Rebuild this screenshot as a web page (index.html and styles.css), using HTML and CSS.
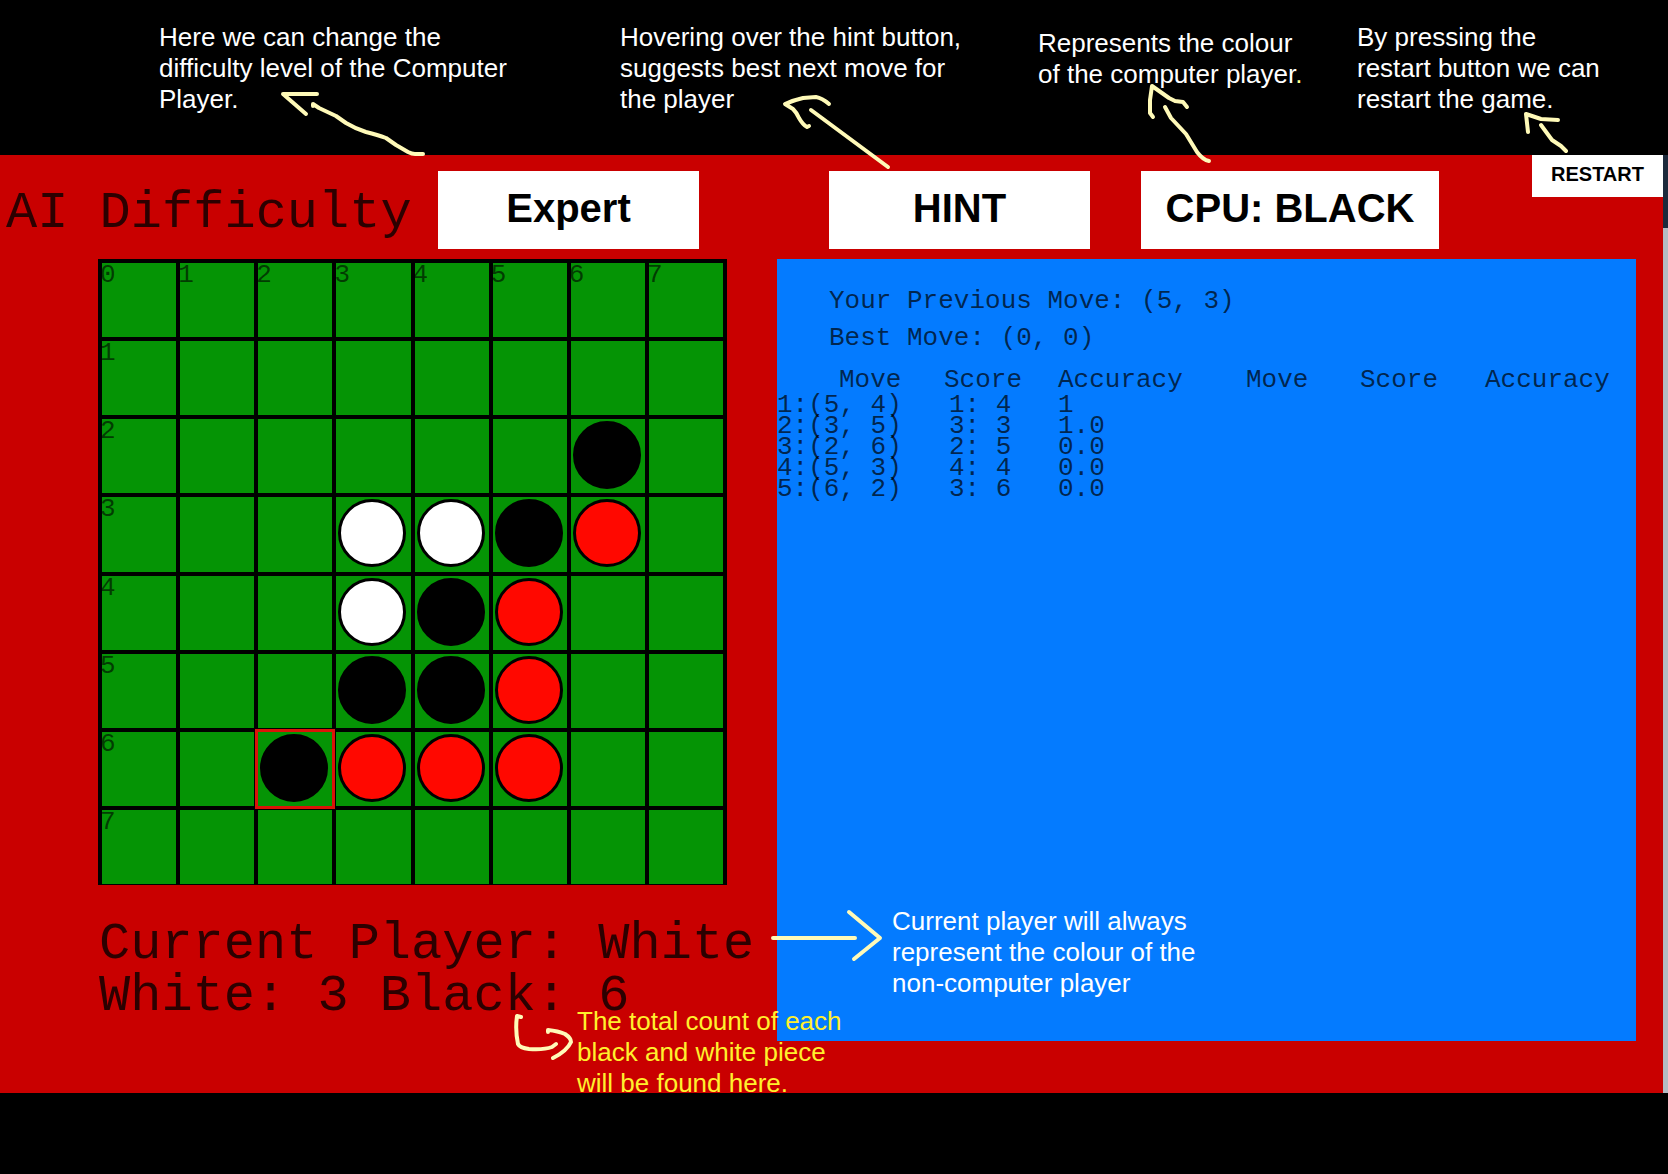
FILE: index.html
```html
<!DOCTYPE html>
<html lang="en">
<head>
<meta charset="utf-8">
<meta name="viewport" content="width=device-width, initial-scale=1">
<title>Othello</title>
<link rel="stylesheet" href="styles.css">
</head>
<body>
<header class="notes">
  <p class="note">Here we can change the<br>difficulty level of the Computer<br>Player.
    <svg class="arrow arrow-difficulty" width="152" height="72" viewBox="278 88 152 72" aria-hidden="true"><path d="M317 94H283L306 114M313 106V104L319 108L336 116L346 123Q356 129 366 132Q378 135 386 138L396 145L408 152Q412 154 415 154H423"/></svg>
  </p>
  <p class="note">Hovering over the hint button,<br>suggests best next move for<br>the player
    <svg class="arrow arrow-hint" width="114" height="80" viewBox="780 92 114 80" aria-hidden="true"><path d="M829 104Q822 98 816 97L803 98Q794 100 785 104L793 109Q797 113 799 118Q803 125 807 127L809 126M811 110L888 167"/></svg>
  </p>
  <p class="note note-low">Represents the colour<br>of the computer player<span class="accent">.</span>
    <svg class="arrow arrow-cpu" width="70" height="86" viewBox="1145 81 70 86" aria-hidden="true"><path d="M1153 117L1150 113V100L1152 86L1169 98L1175 101L1183 102L1187 107M1165 107L1171 118L1186 134L1197 152Q1203 160 1209 161"/></svg>
  </p>
  <p class="note">By pressing the<br>restart button we can<br>restart the game.
    <svg class="arrow arrow-restart" width="52" height="48" viewBox="1520 108 52 48" aria-hidden="true"><path d="M1528 132L1526 114L1541 119L1558 120M1541 125L1552 140L1561 146L1566 151"/></svg>
  </p>
</header>

<div class="window">
  <main class="game">
    <div class="toolbar">
      <span class="mono-large title" id="difficulty-label">AI Difficulty</span>
      <button class="control" type="button" aria-describedby="difficulty-label">Expert</button>
      <button class="control" type="button">HINT</button>
      <button class="control control-wide" type="button">CPU: BLACK</button>
      <button class="restart" type="button">RESTART</button>
    </div>

    <div class="play">
      <section class="left">
        <div class="board">
          <button class="cell" type="button"><span class="coord">0</span></button><button class="cell" type="button"><span class="coord">1</span></button><button class="cell" type="button"><span class="coord">2</span></button><button class="cell" type="button"><span class="coord">3</span></button><button class="cell" type="button"><span class="coord">4</span></button><button class="cell" type="button"><span class="coord">5</span></button><button class="cell" type="button"><span class="coord">6</span></button><button class="cell" type="button"><span class="coord">7</span></button>

          <button class="cell" type="button"><span class="coord">1</span></button><button class="cell" type="button"></button><button class="cell" type="button"></button><button class="cell" type="button"></button><button class="cell" type="button"></button><button class="cell" type="button"></button><button class="cell" type="button"></button><button class="cell" type="button"></button>

          <button class="cell" type="button"><span class="coord">2</span></button><button class="cell" type="button"></button><button class="cell" type="button"></button><button class="cell" type="button"></button><button class="cell" type="button"></button><button class="cell" type="button"></button><button class="cell" type="button"><span class="disc black"></span></button><button class="cell" type="button"></button>

          <button class="cell" type="button"><span class="coord">3</span></button><button class="cell" type="button"></button><button class="cell" type="button"></button><button class="cell" type="button"><span class="disc white"></span></button><button class="cell" type="button"><span class="disc white"></span></button><button class="cell" type="button"><span class="disc black"></span></button><button class="cell" type="button"><span class="disc option"></span></button><button class="cell" type="button"></button>

          <button class="cell" type="button"><span class="coord">4</span></button><button class="cell" type="button"></button><button class="cell" type="button"></button><button class="cell" type="button"><span class="disc white"></span></button><button class="cell" type="button"><span class="disc black"></span></button><button class="cell" type="button"><span class="disc option"></span></button><button class="cell" type="button"></button><button class="cell" type="button"></button>

          <button class="cell" type="button"><span class="coord">5</span></button><button class="cell" type="button"></button><button class="cell" type="button"></button><button class="cell" type="button"><span class="disc black"></span></button><button class="cell" type="button"><span class="disc black"></span></button><button class="cell" type="button"><span class="disc option"></span></button><button class="cell" type="button"></button><button class="cell" type="button"></button>

          <button class="cell" type="button"><span class="coord">6</span></button><button class="cell" type="button"></button><button class="cell last-move" type="button"><span class="disc black"></span></button><button class="cell" type="button"><span class="disc option"></span></button><button class="cell" type="button"><span class="disc option"></span></button><button class="cell" type="button"><span class="disc option"></span></button><button class="cell" type="button"></button><button class="cell" type="button"></button>

          <button class="cell" type="button"><span class="coord">7</span></button><button class="cell" type="button"></button><button class="cell" type="button"></button><button class="cell" type="button"></button><button class="cell" type="button"></button><button class="cell" type="button"></button><button class="cell" type="button"></button><button class="cell" type="button"></button>
        </div>
        <div class="status">
          <p class="mono-large">Current Player: White</p>
          <p class="mono-large">White: 3 Black: 6</p>
          <p class="note note-count">The total count of each<br>black and white piece<br>will be found here.
            <svg class="arrow arrow-count" width="66" height="54" viewBox="512 1010 66 54" aria-hidden="true"><path d="M522 1017L518 1016Q516 1030 519 1044Q521 1048 530 1049Q545 1050 553 1047L557 1044M549 1032V1030Q559 1031 566 1034Q572 1038 572 1042Q568 1051 554 1058"/></svg>
          </p>
        </div>
      </section>

      <section class="panel">
        <p class="info">Your Previous Move: (5, 3)</p>
        <p class="info">Best Move: (0, 0)</p>
        <table class="moves">
          <colgroup><col class="col-move"><col class="col-score"><col class="col-accuracy"><col class="col-move-next"><col class="col-score-next"><col></colgroup>
          <thead>
            <tr><th class="move-head" scope="col">Move</th><th scope="col">Score</th><th scope="col">Accuracy</th><th scope="col">Move</th><th scope="col">Score</th><th scope="col">Accuracy</th></tr>
          </thead>
          <tbody>
            <tr><td>1:(5, 4)</td><td class="score">1: 4</td><td>1</td><td></td><td></td><td></td></tr>
            <tr><td>2:(3, 5)</td><td class="score">3: 3</td><td>1.0</td><td></td><td></td><td></td></tr>
            <tr><td>3:(2, 6)</td><td class="score">2: 5</td><td>0.0</td><td></td><td></td><td></td></tr>
            <tr><td>4:(5, 3)</td><td class="score">4: 4</td><td>0.0</td><td></td><td></td><td></td></tr>
            <tr><td>5:(6, 2)</td><td class="score">3: 6</td><td>0.0</td><td></td><td></td><td></td></tr>
          </tbody>
        </table>
        <p class="note note-player">Current player will always<br>represent the colour of the<br>non-computer player
          <svg class="arrow arrow-player" width="118" height="57" viewBox="768 907 118 57" aria-hidden="true"><path d="M773 938H855M849 912L880 938L854 959"/></svg>
        </p>
      </section>
    </div>
  </main>
</div>
</body>
</html>
```
FILE: styles.css
```css
* {
  box-sizing: border-box;
}

body {
  margin: 0;
  background: #000;
  font-family: "Liberation Sans", Arial, Helvetica, sans-serif;
}

p {
  margin: 0;
}

button {
  border: 0;
  border-radius: 0;
  padding: 0;
  color: #000;
  font-family: inherit;
  cursor: pointer;
}

/* Notes and their hand-drawn arrows */
.notes {
  display: grid;
  grid-template-columns: 461fr 418fr 319fr 311fr;
  align-items: start;
  min-height: 155px;
  padding: 22px 0 0 159px;
}

.note {
  position: relative;
  z-index: 2;
  color: #fff;
  font-size: 26px;
  line-height: 31px;
  white-space: nowrap;
}

.note-low {
  margin-top: 6px;
}

.accent {
  color: #ffff8c;
}

.arrow {
  position: absolute;
  fill: none;
  stroke: #fffab8;
  stroke-width: 4;
  stroke-linecap: round;
  stroke-linejoin: round;
}

.arrow-difficulty {
  left: 119px;
  top: 66px;
}

.arrow-hint {
  left: 160px;
  top: 70px;
}

.arrow-cpu {
  left: 107px;
  top: 53px;
}

.arrow-restart {
  left: 163px;
  top: 86px;
}

.arrow-player {
  left: -124px;
  top: 1px;
}

.arrow-count {
  left: -66px;
  top: 4px;
}

/* Game window, with a sliver of the desktop at its right */
.window {
  padding-right: 5px;
  background: linear-gradient(#1d2a3c 73px, #b4bbc3 73px);
}

.game {
  background: #c90000;
}

.toolbar {
  display: grid;
  grid-template-columns: 438fr 391fr 312fr 391fr 131fr;
  align-items: start;
  min-height: 104px;
}

.mono-large {
  color: rgba(0, 0, 0, 0.78);
  font-family: "Liberation Mono", "Courier New", monospace;
  font-size: 52px;
  line-height: 52px;
  white-space: nowrap;
}

.title {
  align-self: center;
  padding: 14px 0 0 6px;
}

.control {
  width: 261px;
  height: 78px;
  margin-top: 16px;
  padding-bottom: 4px;
  background: #fff;
  font-size: 40px;
  font-weight: 700;
}

.control-wide {
  width: 298px;
}

.restart {
  height: 42px;
  padding-bottom: 3px;
  background: #fff;
  font-size: 20px;
  font-weight: 700;
}

.play {
  display: grid;
  grid-template-columns: minmax(0, 629fr) minmax(0, 859fr);
  column-gap: 50px;
  padding: 0 27px 52px 98px;
}

/* Board: black shows through the gaps as grid lines */
.board {
  display: grid;
  grid-template-columns: repeat(8, 1fr);
  grid-template-rows: repeat(8, 1fr);
  gap: 4px;
  aspect-ratio: 629 / 626;
  padding: 4px 4px 1px;
  background: #000;
}

.cell {
  position: relative;
  display: flex;
  align-items: flex-start;
  padding: 2px 2px 0;
  background: #059405;
}

.last-move {
  outline: 3px solid #dc1408;
}

.coord {
  position: absolute;
  left: -2px;
  top: -1px;
  color: rgba(0, 0, 0, 0.6);
  font-family: "Liberation Mono", "Courier New", monospace;
  font-size: 26px;
  line-height: 26px;
}

.disc {
  width: 97%;
  aspect-ratio: 1;
  border: 3px solid #000;
  border-radius: 50%;
}

.black {
  background: #000;
}

.white {
  background: #fff;
}

.option {
  background: #ff0800;
}

.status {
  position: relative;
  margin-top: 34px;
  padding-left: 1px;
}

.note-count {
  position: absolute;
  left: 479px;
  top: 87px;
  color: #fff02d;
}

/* Move history panel */
.panel {
  position: relative;
  min-height: 782px;
  padding-top: 24px;
  background: #047bff;
  color: rgba(0, 0, 0, 0.7);
  font-family: "Liberation Mono", "Courier New", monospace;
  font-size: 26px;
}

.info {
  padding-left: 52px;
  line-height: 37px;
}

.moves {
  width: 100%;
  margin-top: 8px;
  border-collapse: collapse;
  table-layout: fixed;
  line-height: 21px;
}

.moves th,
.moves td {
  padding: 0;
  font-weight: 400;
  text-align: left;
  white-space: nowrap;
}

.moves th {
  line-height: 30px;
}

.moves .move-head {
  padding-left: 62px;
}

.moves .score {
  padding-left: 5px;
}

.col-move {
  width: 167px;
}

.col-score {
  width: 114px;
}

.col-accuracy {
  width: 188px;
}

.col-move-next {
  width: 114px;
}

.col-score-next {
  width: 125px;
}

.note-player {
  position: absolute;
  left: 115px;
  top: 647px;
  font-family: "Liberation Sans", Arial, Helvetica, sans-serif;
}
```
